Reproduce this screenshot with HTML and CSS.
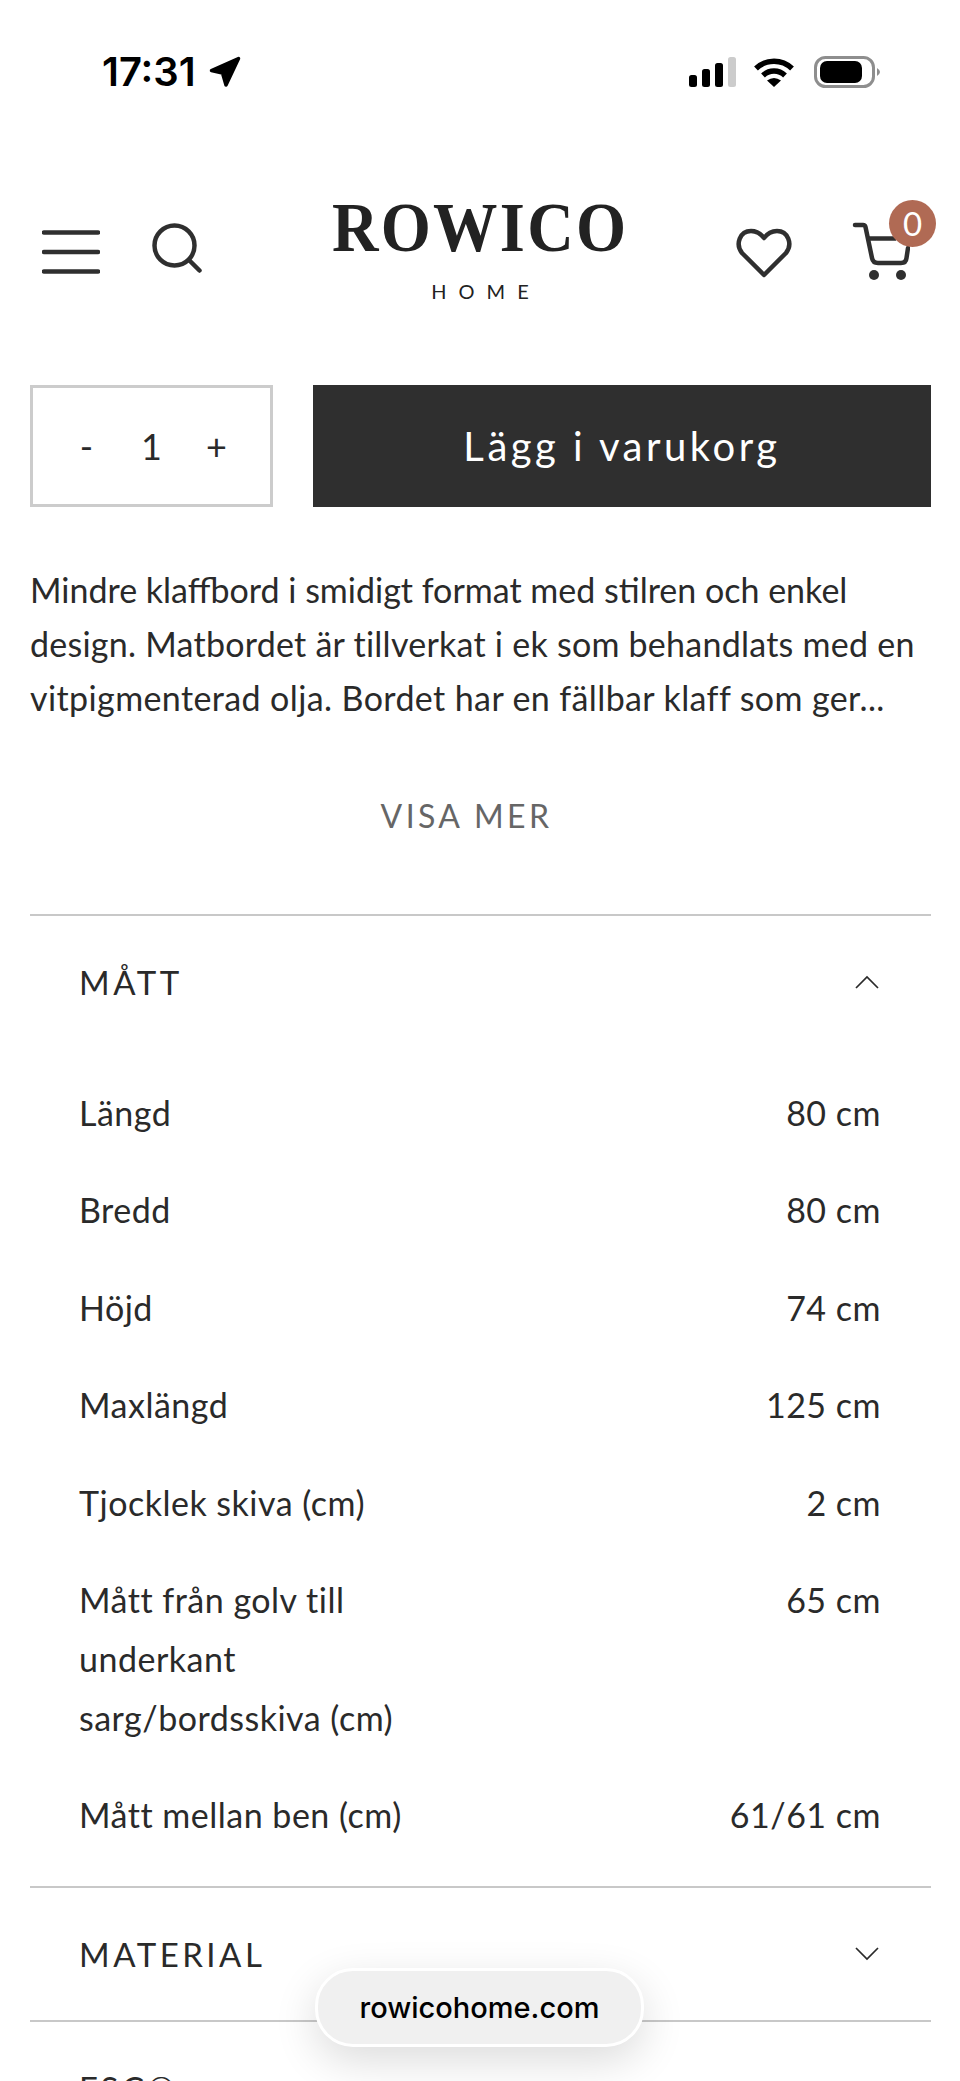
FILE: index.html
```html
<!DOCTYPE html>
<html lang="sv">
<head>
<meta charset="utf-8">
<title>Rowico Home</title>
<link rel="stylesheet" href="styles.css">
</head>
<body>
<div class="status">
  <div class="status-left">
    <span class="time">17:31</span>
    <svg class="loc" width="32" height="32" viewBox="0 0 32 32"><path d="M2.500 14.500 L29.500 2.500 L17 29 L13.500 17 Z" fill="#000" stroke="#000" stroke-width="3.500" stroke-linejoin="round"/></svg>
  </div>
  <div class="status-right">
    <svg class="signal" width="47" height="30" viewBox="0 0 47 30"><rect x="0" y="18" width="8" height="12" rx="2.500" fill="#000"/><rect x="13" y="12" width="8" height="18" rx="2.500" fill="#000"/><rect x="26" y="6" width="8" height="24" rx="2.500" fill="#000"/><rect x="39" y="0" width="8" height="30" rx="2.500" fill="#ccc"/></svg>
    <svg width="42" height="30" viewBox="0 0 42 30"><path d="M3 11.500 A26 26 0 0 1 39 11.500" fill="none" stroke="#000" stroke-width="5.500"/><path d="M10 18.500 A16 16 0 0 1 32 18.500" fill="none" stroke="#000" stroke-width="5.500"/><path d="M21 30 L14 23.500 Q21 18.500 28 23.500 Z" fill="#000"/></svg>
    <svg width="66" height="32" viewBox="0 0 66 32"><rect x="1.500" y="1.500" width="58" height="29" rx="10" fill="#fff" stroke="#8e8e8e" stroke-width="3"/><rect x="6" y="5" width="42" height="22" rx="7" fill="#000"/><path d="M63 12 Q66 14 66 16 Q66 18 63 20 Z" fill="#8e8e8e"/></svg>
  </div>
</div>

<header class="header">
  <div class="header-left">
    <svg class="burger" width="58" height="44" viewBox="0 0 58 44"><path d="M2 2.500H56M2 22H56M2 41.500H56" fill="none" stroke="#2f2f2f" stroke-width="4.500" stroke-linecap="round"/></svg>
    <svg width="50" height="50" viewBox="0 0 50 50"><circle cx="22.500" cy="22.500" r="20" fill="none" stroke="#2f2f2f" stroke-width="4.500"/><path d="M37 37 L47.500 47.500" fill="none" stroke="#2f2f2f" stroke-width="4.500" stroke-linecap="round"/></svg>
  </div>
  <div class="logo">
    <div class="logo-main">ROWICO</div>
    <div class="logo-sub">HOME</div>
  </div>
  <div class="header-right">
    <svg width="56" height="50" viewBox="0 0 56 50"><path d="M28 47 L6 25 C-1 16 4 3 15 3 C21 3 25 6 28 10 C31 6 35 3 41 3 C52 3 57 16 50 25 Z" fill="none" stroke="#2f2f2f" stroke-width="4.500" stroke-linejoin="round"/></svg>
    <div class="cart">
      <svg width="60" height="60" viewBox="0 0 60 60"><path d="M5 3 H13 Q15 3 15.500 5 L22 36 Q23 41 28 41 H51 Q56 41 56.500 36 L58 26" fill="none" stroke="#2f2f2f" stroke-width="4.500" stroke-linecap="round"/><path d="M18 16.500 H46" fill="none" stroke="#2f2f2f" stroke-width="4.500"/><circle cx="24" cy="53" r="5" fill="#2f2f2f"/><circle cx="51" cy="53" r="5" fill="#2f2f2f"/></svg>
      <span class="badge">0</span>
    </div>
  </div>
</header>

<main class="main">
  <div class="buy">
    <div class="qty"><span>-</span><span>1</span><span>+</span></div>
    <button class="add">Lägg i varukorg</button>
  </div>
  <p class="desc"><span class="line line-a">Mindre klaffbord i smidigt format med stilren och enkel</span> <span class="line line-b">design. Matbordet är tillverkat i ek som behandlats med en</span> <span class="line line-c">vitpigmenterad olja. Bordet har en fällbar klaff som ger...</span></p>
  <div class="more">VISA MER</div>

  <section class="acc">
    <div class="acc-head">
      <span>MÅTT</span>
      <svg width="26" height="14" viewBox="0 0 26 14"><path d="M2 13 L13 2 L24 13" fill="none" stroke="#2a2a2a" stroke-width="1.700"/></svg>
    </div>
    <dl class="specs">
      <div class="spec"><dt>Längd</dt><dd>80 cm</dd></div>
      <div class="spec"><dt>Bredd</dt><dd>80 cm</dd></div>
      <div class="spec"><dt>Höjd</dt><dd>74 cm</dd></div>
      <div class="spec"><dt>Maxlängd</dt><dd>125 cm</dd></div>
      <div class="spec"><dt>Tjocklek skiva (cm)</dt><dd>2 cm</dd></div>
      <div class="spec"><dt>Mått från golv till underkant sarg/bordsskiva (cm)</dt><dd>65 cm</dd></div>
      <div class="spec"><dt>Mått mellan ben (cm)</dt><dd>61/61 cm</dd></div>
    </dl>
  </section>
  <section class="acc">
    <div class="acc-head">
      <span>MATERIAL</span>
      <svg width="26" height="14" viewBox="0 0 26 14"><path d="M2 1 L13 12 L24 1" fill="none" stroke="#2a2a2a" stroke-width="1.700"/></svg>
    </div>
  </section>
  <section class="acc">
    <div class="acc-head">
      <span>FSC®</span>
      <svg width="26" height="14" viewBox="0 0 26 14"><path d="M2 1 L13 12 L24 1" fill="none" stroke="#2a2a2a" stroke-width="1.700"/></svg>
    </div>
  </section>
</main>

<div class="pill">rowicohome.com</div>
</body>
</html>
```
FILE: styles.css
```css
* { box-sizing: border-box; }
html, body { margin: 0; padding: 0; height: 2081px; overflow: hidden; background: #fff; }
body { position: relative; color: #2a2a2a; font-family: "Lato", "Liberation Sans", sans-serif; }

.status { display: flex; justify-content: space-between; align-items: center; height: 88px; padding: 55px 80px 0 102px; }
.status-left { display: flex; align-items: center; gap: 13px; }
.time { font-family: "Inter", sans-serif; font-weight: 600; font-size: 40px; line-height: 32px; color: #000; }
.status-right { display: flex; align-items: center; gap: 19px; }
.signal { margin-right: -2px; }

.header { display: grid; grid-template-columns: 1fr auto 1fr; height: 112px; margin-top: 112px; padding: 0 42px; }
.header-left { display: flex; align-items: flex-start; gap: 52px; padding-top: 23px; }
.burger { margin-top: 7px; }
.header-right { display: flex; justify-content: flex-end; align-items: flex-start; gap: 58px; padding: 28px 8px 0 0; }
.logo { text-align: center; }
.logo-main { font-family: "Liberation Serif", serif; font-weight: 700; font-size: 70px; line-height: 52px; letter-spacing: 2.500px; color: #222; transform: scaleX(.92); padding-top: 2px; }
.logo-sub { margin-top: 29px; font-size: 20px; line-height: 16px; letter-spacing: 12px; padding-left: 12px; color: #222; }
.cart { position: relative; width: 60px; height: 60px; margin-top: -6px; }
.badge { position: absolute; top: -22px; left: 39px; width: 47px; height: 47px; border-radius: 50%; background: #b06a54; color: #fff; font-size: 33px; line-height: 47px; text-align: center; }

.main { padding: 73px 29px 0 30px; }
.buy { display: flex; gap: 40px; height: 122px; }
.qty { width: 243px; display: grid; grid-template-columns: repeat(3, 65px); justify-content: center; align-items: center; border: 3px solid #ccc; font-size: 36px; text-align: center; }
.add { flex: 1; border: 0; background: #2f2f2f; color: #fff; font-family: inherit; font-size: 40px; letter-spacing: 3.500px; }
.desc { margin: 56px 0 0; font-size: 34px; line-height: 54px; white-space: nowrap; }
.line { display: block; }
.line-a { letter-spacing: 0; }
.line-b { letter-spacing: .25px; }
.line-c { letter-spacing: .39px; }
.more { margin-top: 71px; padding-right: 28px; text-align: center; font-size: 32px; line-height: 40px; letter-spacing: 3.400px; color: #666; }

.acc { border-top: 2px solid #c8c8c8; }
.more + .acc { margin-top: 78px; }
.acc-head { display: flex; justify-content: space-between; align-items: center; height: 132px; padding: 0 51px 0 49px; font-size: 33px; letter-spacing: 3.500px; }
.specs { margin: 0; padding: 16px 50px 22px 49px; }
.spec { display: flex; justify-content: space-between; padding: 19.500px 0; font-size: 34px; line-height: 58.600px; letter-spacing: .5px; }
.spec dt { width: 340px; }
.spec dd { margin: 0; }

.pill { position: absolute; left: 315px; top: 1968px; width: 329px; height: 79px; border: 3px solid #fff; border-radius: 38px; background: #f0f0f0; box-shadow: 0 14px 44px rgba(0, 0, 0, .14); color: #000; font-family: "Inter", sans-serif; font-weight: 500; font-size: 29px; line-height: 73px; text-align: center; }
```
